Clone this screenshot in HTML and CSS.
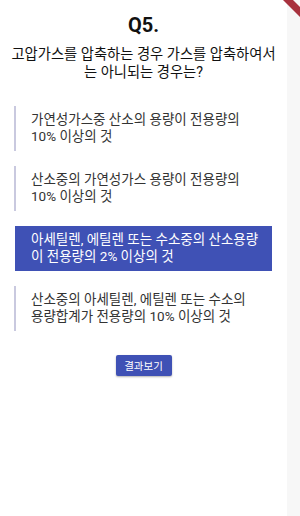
FILE: index.html
```html
<!DOCTYPE html>
<html lang="ko">
<head>
  <meta charset="UTF-8" />
  <meta name="viewport" content="width=device-width, initial-scale=1.0"/>
  <title>Q5</title>
  <link rel="stylesheet" href="styles.css">
</head>
<body>
  <div class="page">
    <div class="quiz">
      <h1 class="num">Q5.</h1>
      <p class="question">고압가스를 압축하는 경우 가스를 압축하여서는 아니되는 경우는?</p>

      <div class="options">
        <div class="option">가연성가스중 산소의 용량이 전용량의 10% 이상의 것</div>
        <div class="option">산소중의 가연성가스 용량이 전용량의 10% 이상의 것</div>
        <div class="option selected">아세틸렌, 에틸렌 또는 수소중의 산소용량이 전용량의 2% 이상의 것</div>
        <div class="option">산소중의 아세틸렌, 에틸렌 또는 수소의 용량합계가 전용량의 10% 이상의 것</div>
      </div>

      <div class="actions">
        <button class="result-button">결과보기</button>
      </div>
    </div>
    <div class="side"></div>
  </div>
  <div class="debug-banner"></div>
</body>
</html>
```

FILE: styles.css
```css
* {
  margin: 0;
  padding: 0;
  box-sizing: border-box;
}

body {
  background: #fff;
  font-family: Roboto, 'Noto Sans CJK KR', sans-serif;
  width: 300px;
  height: 516px;
  overflow: hidden;
  position: relative;
}

.page {
  display: flex;
  height: 516px;
}

.quiz {
  width: 287px;
  padding-top: 12px;
}

.side {
  flex: 1;
  background: #f7f7f7;
}

.num {
  text-align: center;
  font-size: 20px;
  line-height: 26px;
  font-weight: bold;
  color: #111;
}

.question {
  text-align: center;
  font-size: 14.3px;
  line-height: 18px;
  color: #111;
  margin-top: 7px;
  padding: 0 8px;
}

.options {
  display: flex;
  flex-direction: column;
  gap: 15px;
  margin: 25px 15px 0 14px;
}

.option {
  border-left: 2px solid #c9c9df;
  padding: 5px 12px 6px 15px;
  height: 45px;
  font-size: 13.5px;
  line-height: 17px;
  color: #333;
}

.option.selected {
  background: #3f51b5;
  color: #fff;
  border-left: none;
  margin-left: 1px;
  padding-left: 16px;
}

.actions {
  display: flex;
  justify-content: center;
  margin-top: 24px;
}

.result-button {
  background: #3f51b5;
  color: #fff;
  border: none;
  border-radius: 2px;
  width: 56px;
  height: 21px;
  font-family: inherit;
  font-size: 10.5px;
  box-shadow: 0 1px 2px rgba(0, 0, 0, 0.3);
}

.debug-banner {
  position: absolute;
  top: 0;
  right: 0;
  width: 17px;
  height: 17px;
  background: #a8323e;
  clip-path: polygon(0 0, 10px 0, 17px 7px, 17px 17px);
}
```
